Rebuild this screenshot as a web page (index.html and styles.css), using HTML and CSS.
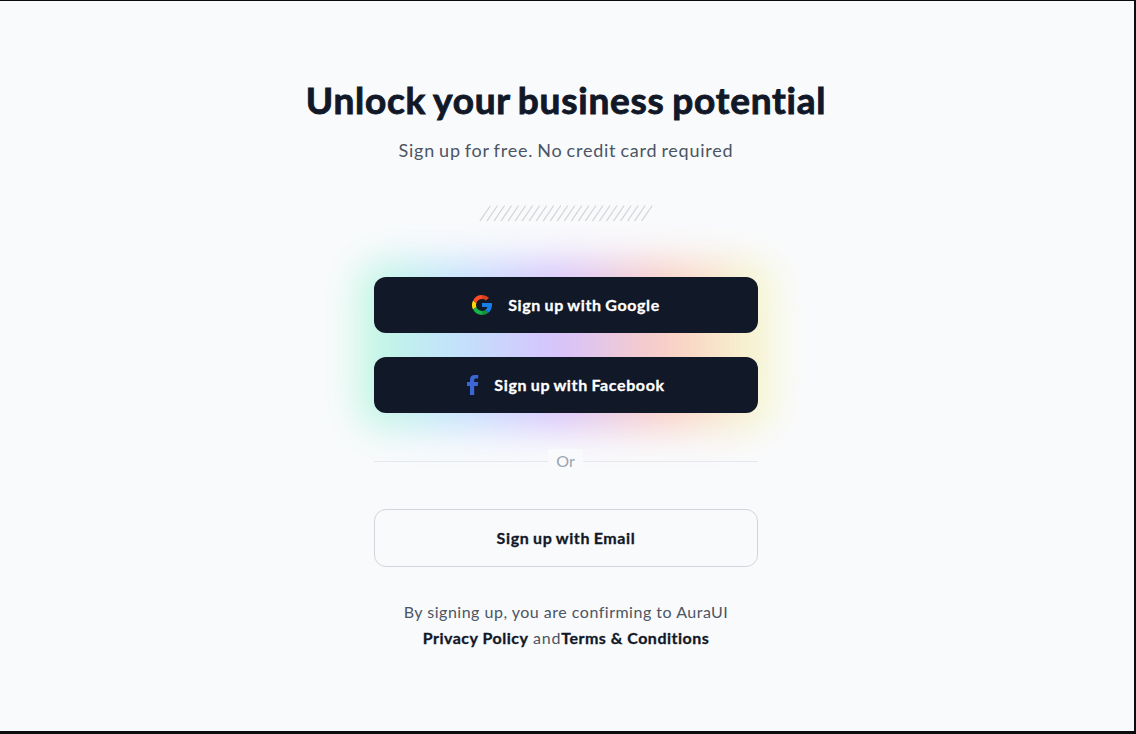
FILE: index.html
```html
<!DOCTYPE html>
<html lang="en">
<head>
<meta charset="utf-8">
<title>Sign up</title>
<link rel="stylesheet" href="styles.css">
</head>
<body>
<main class="page">
  <section class="signup">
    <h1 class="title">Unlock your business potential</h1>
    <p class="subtitle">Sign up for free. No credit card required</p>
    <svg class="hatch" width="174" height="17" viewBox="0 0 174 17" aria-hidden="true">
      <defs>
        <path id="stroke" d="M1.2 15.6 11.2 1"/>
        <g id="six"><use href="#stroke"/><use href="#stroke" x="7.03"/><use href="#stroke" x="14.06"/><use href="#stroke" x="21.09"/><use href="#stroke" x="28.12"/><use href="#stroke" x="35.15"/></g>
      </defs>
      <g fill="none" stroke="#d2d4d8" stroke-width="1.2" stroke-linecap="round"><use href="#six"/><use href="#six" x="42.18"/><use href="#six" x="84.36"/><use href="#six" x="126.54"/></g>
    </svg>
    <div class="social">
      <div class="glow"></div>
      <button class="button google">
        <svg width="20" height="20" viewBox="0 0 20 20" aria-hidden="true">
          <path fill="#ffd500" d="M4.4 7.9 1.1 5.4A10 10 0 0 0 1.1 14.6L4.4 12.1A6 6 0 0 1 4.4 7.9Z"/>
          <path fill="#ff4b26" d="M4.4 7.9 1.1 5.4A10 10 0 0 1 10 0V4.1A6 6 0 0 0 4.4 7.9Z"/>
          <path fill="#d93f21" d="M10 0A10 10 0 0 1 17 2.8L14 5.5A6 6 0 0 0 10 4.1Z"/>
          <path fill="#17b34a" d="M4.4 12.1 1.1 14.6A10 10 0 0 0 10 20V15.9A6 6 0 0 1 4.4 12.1Z"/>
          <path fill="#14933d" d="M10 15.9V20A10 10 0 0 0 16.4 17.7L13.2 15A6 6 0 0 1 10 15.9Z"/>
          <path fill="#167ee6" d="M10 8.1H19.8A10 10 0 0 1 16.4 17.7L13.2 15A5.9 5.9 0 0 0 15.4 12.1H10Z"/>
        </svg>
        <span>Sign up with Google</span>
      </button>
      <button class="button facebook">
        <svg width="12" height="20" viewBox="0 0 12 20" aria-hidden="true">
          <path fill="#3c65d6" d="M3 20V11H0V7H3V4.4C3 1.5 4.9 0 7.7 0H11.2V3.4H9C7.6 3.4 7.2 3.9 7.2 5.1V7H11.2L10.8 11H7.2V20Z"/>
        </svg>
        <span>Sign up with Facebook</span>
      </button>
    </div>
    <div class="divider"><span class="divider-text">Or</span></div>
    <button class="button email"><span>Sign up with Email</span></button>
    <p class="terms">By signing up, you are confirming to AuraUI<br><a>Privacy Policy</a> <span class="and">and</span><a>Terms &amp; Conditions</a></p>
  </section>
</main>
</body>
</html>
```
FILE: styles.css
```css
* { box-sizing: border-box; }
body { margin: 0; font-family: Lato, "Liberation Sans", sans-serif; color: #111827; }
.page {
  height: 734px;
  padding: 79px 2px 0 0;
  background: #f9fafc;
  border: solid #0b0c0f;
  border-width: 1px 2px 3px 0;
}
.signup { display: flex; flex-direction: column; align-items: center; width: 524px; margin: 0 auto; }
.title {
  margin: 0;
  font-size: 37px;
  line-height: 40px;
  font-weight: 700;
  letter-spacing: .76px;
  word-spacing: -2px;
  -webkit-text-stroke: .9px currentColor;
  white-space: nowrap;
}
.subtitle { margin: 16px 0 0; font-size: 18px; line-height: 28px; letter-spacing: .77px; word-spacing: -1.3px; color: #4b5563; white-space: nowrap; }
.hatch { margin-top: 41px; }
.social { position: relative; display: grid; gap: 24px; width: 384px; margin-top: 55px; }
.glow {
  position: absolute;
  inset: -16px;
  border-radius: 24px;
  opacity: .3;
  filter: blur(18px);
  background: linear-gradient(90deg, #44ff9a -.55%, #44b0ff 22.86%, #8b44ff 48.36%, #ff6644 73.33%, #ebff70 99.34%);
}
.button {
  position: relative;
  display: flex;
  align-items: center;
  justify-content: center;
  width: 384px;
  height: 56px;
  padding: 0;
  border: 0;
  border-radius: 12px;
  background: #111827;
  color: #fff;
  font: 700 16px/24px Lato, sans-serif;
  letter-spacing: .63px;
  word-spacing: -.9px;
  -webkit-text-stroke: .3px currentColor;
  white-space: nowrap;
}
.google { gap: 16px; }
.facebook { gap: 15px; }
.divider { position: relative; display: flex; align-items: center; width: 384px; height: 24px; margin-top: 36px; color: #9ca3af; }
.divider::before, .divider::after { content: ""; flex: 1; height: 1px; background: #e5e7eb; }
.divider::before { flex: none; width: 174px; }
.divider-text { width: 35px; text-align: center; font-size: 16px; line-height: 24px; background: #f9fafc; }
.email { height: 58px; margin-top: 36px; background: transparent; border: 1px solid #d1d5db; color: #111827; }
.terms { margin: 32px 0 0; font-size: 16px; line-height: 26px; letter-spacing: .5px; color: #4b5563; text-align: center; white-space: nowrap; }
.terms a { color: #111827; font-weight: 700; -webkit-text-stroke: .3px currentColor; }
.and { letter-spacing: .8px; }
```
